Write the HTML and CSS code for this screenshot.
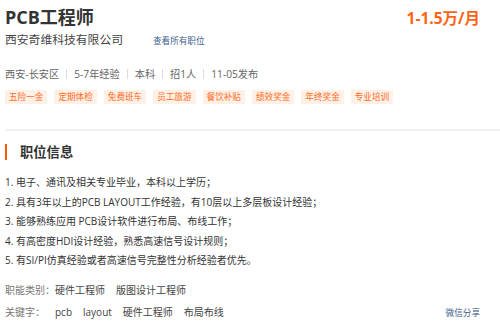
FILE: index.html
```html
<!DOCTYPE html>
<html lang="zh-CN">
<head>
  <meta charset="UTF-8" />
  <title>PCB工程师 - 西安奇维科技有限公司</title>
  <link rel="stylesheet" href="styles.css">
</head>
<body>

  <div class="job-page">
    <header class="job-head">
      <div class="title-row">
        <h1 class="job-title">PCB工程师</h1>
        <span class="salary">1-1.5万/月</span>
      </div>
      <div class="company-row">
        <span class="company">西安奇维科技有限公司</span>
        <a class="all-jobs" href="#">查看所有职位</a>
      </div>
      <div class="meta">
        <span>西安-长安区</span><i class="sep"></i>
        <span>5-7年经验</span><i class="sep"></i>
        <span>本科</span><i class="sep"></i>
        <span>招1人</span><i class="sep"></i>
        <span>11-05发布</span>
      </div>
      <div class="tags">
        <span class="tag">五险一金</span>
        <span class="tag">定期体检</span>
        <span class="tag">免费班车</span>
        <span class="tag">员工旅游</span>
        <span class="tag">餐饮补贴</span>
        <span class="tag">绩效奖金</span>
        <span class="tag">年终奖金</span>
        <span class="tag">专业培训</span>
      </div>
    </header>

    <section class="job-info">
      <h2 class="section-title">职位信息</h2>
      <div class="duty-list">
        <p>1. 电子、通讯及相关专业毕业，本科以上学历；</p>
        <p>2. 具有3年以上的PCB LAYOUT工作经验，有10层以上多层板设计经验；</p>
        <p>3. 能够熟练应用 PCB设计软件进行布局、布线工作；</p>
        <p>4. 有高密度HDI设计经验，熟悉高速信号设计规则；</p>
        <p>5. 有SI/PI仿真经验或者高速信号完整性分析经验者优先。</p>
      </div>
      <div class="attr attr-first">
        <span class="attr-label">职能类别：</span>
        <span class="attr-item">硬件工程师</span>
        <span class="attr-item">版图设计工程师</span>
      </div>
      <div class="attr">
        <span class="attr-label">关键字：</span>
        <span class="attr-item">pcb</span>
        <span class="attr-item">layout</span>
        <span class="attr-item">硬件工程师</span>
        <span class="attr-item">布局布线</span>
        <a class="share" href="#">微信分享</a>
      </div>
    </section>
  </div>

</body>
</html>
```

FILE: styles.css
```css
/* --- BASE --- */
body {
  --text-main: #333333;
  --text-secondary: #666666;
  --link: #3d5d8e;
  --accent: #ff6414;
  --tag-bg: #fff1e5;
  --line: #f1f1f1;
  margin: 0;
  background: #ffffff;
  color: var(--text-main);
  font-family: "Open Sans", "Noto Sans CJK SC", sans-serif;
}
a { text-decoration: none; }
p, h1, h2 { margin: 0; }

.job-page {
  padding: 6px 0 0 5px;
}

/* --- HEAD --- */
.job-head {
  padding-right: 20px;
  padding-bottom: 25px;
  border-bottom: 2px solid var(--line);
}
.title-row {
  display: flex;
  align-items: center;
  justify-content: space-between;
  height: 22px;
}
.job-title {
  font-size: 18px;
  line-height: 22px;
  font-weight: 700;
  color: var(--text-main);
}
.salary {
  font-size: 15.5px;
  font-weight: 700;
  color: var(--accent);
}
.company-row {
  display: flex;
  align-items: baseline;
  gap: 30px;
  margin-top: 3px;
  line-height: 16px;
}
.company { font-size: 11.8px; color: #444; }
.all-jobs { font-size: 8.6px; color: var(--link); }

.meta {
  display: flex;
  align-items: center;
  gap: 7px;
  margin-top: 17px;
  line-height: 16px;
  font-size: 10.2px;
  color: var(--text-secondary);
}
.sep {
  width: 1px;
  height: 10px;
  background: #dddddd;
}

.tags {
  display: flex;
  gap: 7px;
  margin-top: 8px;
}
.tag {
  height: 14px;
  line-height: 14px;
  padding: 0 4px;
  font-size: 8.6px;
  color: #ff6a26;
  background: var(--tag-bg);
}

/* --- JOB INFO --- */
.job-info { padding-right: 20px; }
.section-title {
  margin-top: 13px;
  padding-left: 13px;
  border-left: 2.5px solid #ff5a00;
  font-size: 13.3px;
  line-height: 16px;
  font-weight: 700;
}
.duty-list {
  margin-top: 13px;
  font-size: 10px;
  line-height: 19.5px;
  color: var(--text-main);
}
.attr {
  display: flex;
  align-items: baseline;
  line-height: 22px;
  font-size: 10px;
  color: #444;
  white-space: nowrap;
}
.attr-first { margin-top: 8px; }
.attr-label {
  flex: none;
  width: 50px;
  color: #777;
}
.attr-item { margin-right: 11px; }
.share {
  margin-left: auto;
  font-size: 8.6px;
  color: var(--link);
}
```
